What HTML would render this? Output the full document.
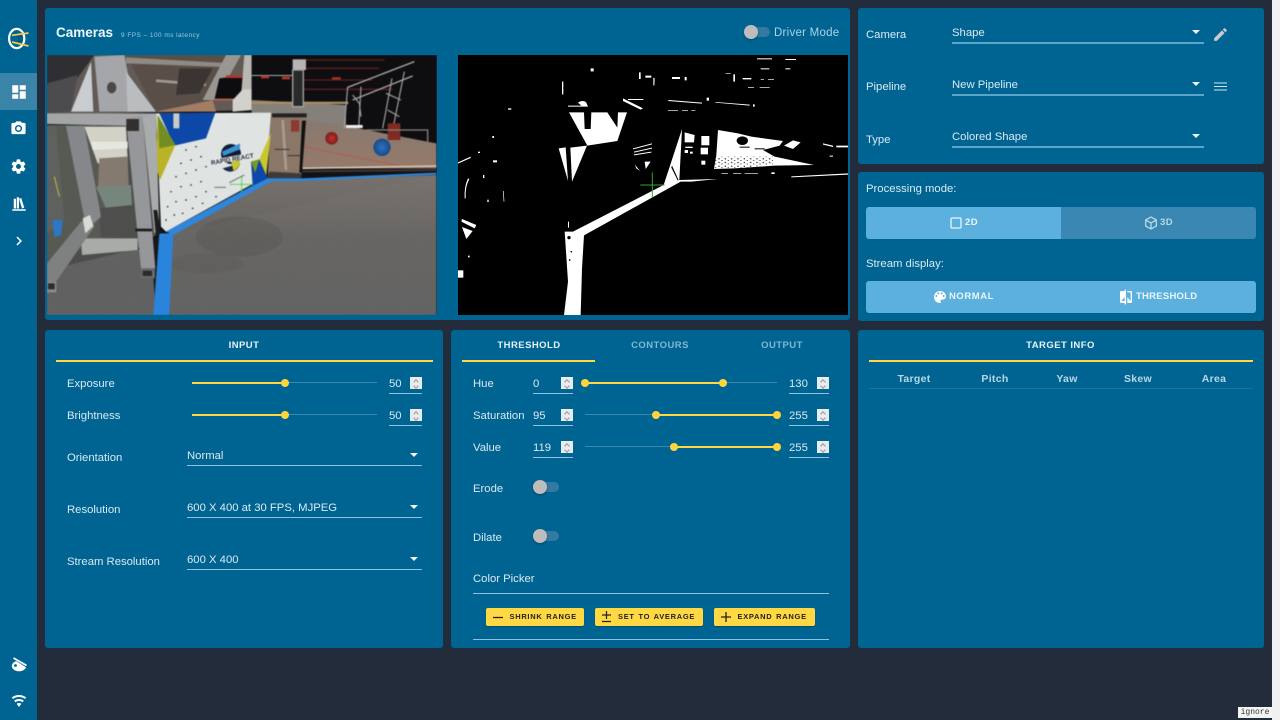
<!DOCTYPE html>
<html lang="en"><head><meta charset="utf-8"><title>PhotonVision</title>
<style>
*{box-sizing:border-box}
html,body{margin:0;padding:0;width:1280px;height:720px;overflow:hidden;background:#232c3a;font-family:"Liberation Sans",sans-serif;color:#dcecf4}
.p{position:absolute;background:#006492;border-radius:3px}
.a{position:absolute}
.t{position:absolute;white-space:nowrap;line-height:14px;margin-top:1px;font-size:11.3px;letter-spacing:0;color:#d8eaf3}
.c{transform:translateX(-50%)}
.tab{font-size:9.5px;font-weight:bold;letter-spacing:.45px;color:#e6f2f8}
.off{color:#80b8d3}
.l{position:absolute;height:1px;background:#8fc2da}
.y{position:absolute;height:2px;background:#ffd843}
.tr{position:absolute;height:1px;background:#3d86ac}
.th{position:absolute;width:8px;height:8px;border-radius:50%;background:#ffd43b;margin:-4px 0 0 -4px}
.sp{position:absolute;width:12px;height:12px;background:#e9ecef}
.sp:before,.sp:after{content:"";position:absolute;left:3.5px;width:3px;height:3px;border:1px solid #999;border-width:1px 0 0 1px;transform:rotate(45deg)}
.sp:before{top:2.5px}.sp:after{top:6.5px;transform:rotate(225deg)}
.car{position:absolute;width:0;height:0;border:4px solid transparent;border-top:4px solid #eef6fa;border-bottom:0}
.tt{position:absolute;height:10px;width:20px;border-radius:5px;background:#34799f}
.kn{position:absolute;width:14px;height:14px;border-radius:50%;background:#bdbdbd;box-shadow:0 1px 2px rgba(0,0,0,.3)}
.btn{position:absolute;top:608px;height:18px;background:#ffd843;border-radius:2px;box-shadow:0 1px 1px rgba(0,0,0,.25)}
.bt{position:absolute;top:612px;line-height:10px;font-size:7.5px;font-weight:bold;letter-spacing:.7px;word-spacing:1px;color:#222;white-space:nowrap}
.hd{color:#b8d7e6;font-weight:bold;font-size:10.5px;letter-spacing:.3px}
svg.i{position:absolute;fill:#fff}
</style></head><body>

<!-- sidebar -->
<div class="a" style="left:0;top:0;width:37px;height:720px;background:#006492"></div>
<div class="a" style="left:0;top:73px;width:37px;height:37px;background:#3a84a8"></div>
<svg class="a" style="left:5px;top:26px" width="26" height="25" viewBox="5 26 26 25">
<ellipse cx="16.7" cy="38.5" rx="7.6" ry="9.6" fill="none" stroke="#fff" stroke-width="2.2"/>
<path d="M16 33L22 44M22 32.5L17 45" stroke="#0b4a6c" stroke-width=".8" fill="none"/>
<path d="M12 35.300L28.500 33M12 42L28.500 46" stroke="#f2cb4f" stroke-width="1.700" fill="none"/>
</svg>
<svg class="i" style="left:10px;top:83px" width="18" height="18" viewBox="0 0 24 24"><path d="M13,3V9H21V3M13,21H21V11H13M3,21H11V15H3M3,13H11V3H3V13Z"/></svg>
<svg class="i" style="left:10px;top:120px" width="17" height="17" viewBox="0 0 24 24"><path d="M4,4H7L9,2H15L17,4H20A2,2 0 0,1 22,6V18A2,2 0 0,1 20,20H4A2,2 0 0,1 2,18V6A2,2 0 0,1 4,4M12,7A5,5 0 0,0 7,12A5,5 0 0,0 12,17A5,5 0 0,0 17,12A5,5 0 0,0 12,7M12,9A3,3 0 0,1 15,12A3,3 0 0,1 12,15A3,3 0 0,1 9,12A3,3 0 0,1 12,9Z"/></svg>
<svg class="i" style="left:10px;top:158px" width="17" height="17" viewBox="0 0 24 24"><path d="M12,15.5A3.5,3.5 0 0,1 8.5,12A3.5,3.5 0 0,1 12,8.5A3.5,3.5 0 0,1 15.5,12A3.5,3.5 0 0,1 12,15.5M19.43,12.97C19.47,12.65 19.5,12.33 19.5,12C19.5,11.67 19.47,11.34 19.43,11L21.54,9.37C21.73,9.22 21.78,8.95 21.66,8.73L19.66,5.27C19.54,5.05 19.27,4.96 19.05,5.05L16.56,6.05C16.04,5.66 15.5,5.32 14.87,5.07L14.5,2.42C14.46,2.18 14.25,2 14,2H10C9.75,2 9.54,2.18 9.5,2.42L9.13,5.07C8.5,5.32 7.96,5.66 7.44,6.05L4.95,5.05C4.73,4.96 4.46,5.05 4.34,5.27L2.34,8.73C2.21,8.95 2.27,9.22 2.46,9.37L4.57,11C4.53,11.34 4.5,11.67 4.5,12C4.5,12.33 4.53,12.65 4.57,12.97L2.46,14.63C2.27,14.78 2.21,15.05 2.34,15.27L4.34,18.73C4.46,18.95 4.73,19.03 4.95,18.95L7.44,17.94C7.96,18.34 8.5,18.68 9.13,18.93L9.5,21.58C9.54,21.82 9.75,22 10,22H14C14.25,22 14.46,21.82 14.5,21.58L14.87,18.93C15.5,18.67 16.04,18.34 16.56,17.94L19.05,18.95C19.27,19.03 19.54,18.95 19.66,18.73L21.66,15.27C21.78,15.05 21.73,14.78 21.54,14.63L19.43,12.97Z"/></svg>
<svg class="i" style="left:9.500px;top:195px" width="18" height="18" viewBox="0 0 24 24"><path d="M9 3V18H12V3H9M12 5L16 18L19 17L15 4L12 5M5 5V18H8V5H5M3 19V21H21V19H3Z"/></svg>
<svg class="i" style="left:10px;top:232px" width="18" height="18" viewBox="0 0 24 24"><path d="M8.59,16.58L13.17,12L8.59,7.41L10,6L16,12L10,18L8.59,16.58Z"/></svg>
<svg class="a" style="left:10px;top:656px" width="20" height="18" viewBox="0 0 20 18"><ellipse cx="9" cy="10" rx="7.200" ry="5.300" fill="#fff"/><path d="M2 .5L17 10" stroke="#006492" stroke-width="3.200" fill="none"/><path d="M3.500 2L16.500 9.500" stroke="#fff" stroke-width="1.800" fill="none"/><circle cx="5.500" cy="9.500" r="1.400" fill="#006492"/></svg>
<svg class="i" style="left:11px;top:693px" width="16" height="16" viewBox="0 0 24 24"><path d="M12,21L15.6,16.2C14.6,15.45 13.35,15 12,15C10.65,15 9.4,15.45 8.4,16.2L12,21M12,3C7.95,3 4.21,4.34 1.2,6.6L3,9C5.5,7.12 8.62,6 12,6C15.38,6 18.5,7.12 21,9L22.8,6.6C19.79,4.34 16.05,3 12,3M12,9C9.3,9 6.81,9.89 4.8,11.4L6.6,13.8C8.1,12.67 9.97,12 12,12C14.03,12 15.9,12.67 17.4,13.8L19.2,11.4C17.19,9.89 14.7,9 12,9Z"/></svg>

<!-- panels -->
<div class="p" style="left:45px;top:8px;width:805px;height:312px"></div>
<div class="p" style="left:858px;top:8px;width:406px;height:156px"></div>
<div class="p" style="left:858px;top:172px;width:406px;height:149px"></div>
<div class="p" style="left:45px;top:330px;width:398px;height:318px"></div>
<div class="p" style="left:451px;top:330px;width:399px;height:318px"></div>
<div class="p" style="left:858px;top:330px;width:406px;height:318px"></div>
<div class="a" style="left:1272px;top:0;width:8px;height:720px;background:#f1f1f1"></div>
<div class="a" style="left:1238px;top:707px;width:34px;height:11px;background:#f4f4f4;font:8px/11px 'Liberation Mono',monospace;color:#333;text-align:center">ignore</div>

<!-- header -->
<div class="t" style="left:56px;top:25px;font-size:13.500px;font-weight:bold;color:#eef7fb">Cameras</div>
<div class="t" style="left:121px;top:28px;font-size:6.500px;letter-spacing:.45px;color:#9cc9de">9 FPS – 100 ms latency</div>
<div class="tt" style="left:750px;top:27px"></div><div class="kn" style="left:744px;top:25px"></div>
<div class="t" style="left:774px;top:25px;font-size:11.500px;letter-spacing:.25px;color:#a9d2e5">Driver Mode</div>

<!-- left camera -->
<div class="a" style="left:47px;top:55px;width:390px;height:260px;overflow:hidden">
<svg class="a" style="left:0;top:0;filter:blur(.6px)" width="390" height="260" viewBox="143 165 1170 780" preserveAspectRatio="none">
<defs>
<filter id="gr" x="0" y="0" width="100%" height="100%"><feTurbulence type="fractalNoise" baseFrequency=".35" numOctaves="2" seed="4"/><feColorMatrix values="0 0 0 0 .42 0 0 0 0 .42 0 0 0 0 .42 1.600 0 0 0 -.55"/></filter>
<linearGradient id="cp" x1="0" y1="0" x2="0" y2="1"><stop offset="0" stop-color="#76716c"/><stop offset=".45" stop-color="#656361"/><stop offset="1" stop-color="#606060"/></linearGradient>
<linearGradient id="fl" x1="0" y1="0" x2="0" y2="1"><stop offset="0" stop-color="#857a70"/><stop offset="1" stop-color="#967a6a"/></linearGradient>
<radialGradient id="bl"><stop offset="0" stop-color="#2d72c4"/><stop offset="1" stop-color="#174a86"/></radialGradient>
<radialGradient id="rd"><stop offset="0" stop-color="#c3302c"/><stop offset="1" stop-color="#7a1d1c"/></radialGradient>
</defs>
<rect x="143" y="165" width="1170" height="780" fill="#121214"/>
<!-- upper-left machine -->
<polygon points="143,165 760,165 760,330 143,345" fill="#625a54"/>
<polygon points="143,165 285,165 230,240 143,340" fill="#2f2f33"/>
<polygon points="143,250 235,225 215,335 143,340" fill="#4c4c4e"/>
<polygon points="380,165 690,165 640,300 500,335 470,335" fill="#5a4f48"/>
<polygon points="380,172 700,190 700,202 380,190" fill="#8f8a84"/>
<polygon points="470,238 620,250 620,258 470,246" fill="#a09a94"/>
<polygon points="540,205 640,205 600,280 530,285" fill="#3a3532"/>
<polygon points="215,335 275,185 282,335" fill="#c9ccd0"/>
<polygon points="285,170 375,165 408,335 300,335" fill="#a5a6a9"/>
<ellipse cx="337" cy="263" rx="14" ry="17" fill="#4b4846"/>
<polygon points="380,215 470,335 385,335" fill="#babdc0"/>
<polygon points="470,335 640,300 650,335" fill="#a37d62"/>
<polygon points="610,300 680,165 725,165 650,300" fill="#9a9793"/>
<polygon points="660,235 735,225 722,296 645,300" fill="#0d0d0f"/>
<rect x="645" y="296" width="80" height="5" fill="#c7604a"/>
<polygon points="735,165 757,165 757,325 700,335 725,290" fill="#b9b7b3"/>
<polygon points="700,300 730,268 757,268 757,330 700,335" fill="#d3d1cc"/>
<!-- arena -->
<polygon points="757,165 1311,165 1311,430 757,320" fill="#0e0e10"/>
<polygon points="757,300 1040,315 1040,400 900,400 810,340 757,340" fill="#85807a"/>
<polygon points="810,340 1040,378 1311,430 1311,505 905,505 810,500" fill="url(#fl)"/>
<rect x="757" y="225" width="135" height="3" fill="#aaa"/><rect x="757" y="305" width="290" height="7" fill="#a98e64"/>
<rect x="785" y="227" width="24" height="8" fill="#b5342a"/><rect x="848" y="230" width="24" height="8" fill="#b5342a"/><rect x="998" y="232" width="26" height="8" fill="#b5342a"/><rect x="680" y="226" width="50" height="8" fill="#b5342a"/>
<path d="M905 180H1155M905 205H1140M915 240H1120M910 268H1180" stroke="#5e1f1f" stroke-width="4"/>
<rect x="880" y="178" width="40" height="32" fill="#b5b5b5"/>
<path d="M880 210H912V320H880Z" stroke="#a6a6a6" stroke-width="4" fill="#2a2a2a"/>
<path d="M1045 262L1245 185M1060 300L1240 228" stroke="#a9a9a9" stroke-width="4" fill="none"/>
<path d="M1045 260L1035 385M1085 260L1078 385M1178 235L1150 385M1215 215L1180 390M1060 285L1080 310L1085 350M1160 280L1205 300M1165 330L1200 350" stroke="#a0a0a0" stroke-width="3.500" fill="none"/>
<rect x="1165" y="370" width="38" height="50" fill="#7f2a25"/>
<rect x="1040" y="375" width="50" height="9" fill="#eeeeee"/>
<path d="M1100 390H1285V425" stroke="#8a837c" stroke-width="4" fill="none"/>
<path d="M915 440L1200 498" stroke="#b8574a" stroke-width="2.500"/>
<path d="M910 505L1311 498" stroke="#e4d5c4" stroke-width="4"/><path d="M905 514L1311 510" stroke="#3b3734" stroke-width="6"/>
<circle cx="997" cy="415" r="19" fill="url(#rd)"/><circle cx="1148" cy="442" r="26" fill="url(#bl)"/>
<!-- carpet -->
<polygon points="520,700 810,545 900,540 1311,525 1311,945 510,945" fill="url(#cp)"/>
<polygon points="143,810 415,745 460,805 470,945 143,945" fill="#5e5e5e"/>
<ellipse cx="720" cy="710" rx="130" ry="60" fill="#4f4c49" opacity=".3"/>
<ellipse cx="620" cy="790" rx="110" ry="30" fill="#4e4c4a" opacity=".22"/>
<rect x="143" y="525" width="1170" height="420" filter="url(#gr)" opacity=".18" style="clip-path:polygon(32% 42%,100% 0,100% 100%,0 100%,0 68%)"/>
<!-- right wall -->
<polygon points="815,340 920,340 905,535 805,535" fill="#8b7768"/>
<polygon points="818,340 922,340 922,352 818,352" fill="#222"/>
<polygon points="908,362 920,362 908,518 900,518" fill="#111"/>
<polygon points="810,515 905,520 905,538 800,540" fill="#3c3b3a"/>
<path d="M850 360L860 510" stroke="#a89c90" stroke-width="8"/><path d="M825 448H870M865 467H905" stroke="#3a312a" stroke-width="3"/>
<polygon points="875,360 900,360 900,395 875,395" fill="#8b3a30"/>
<!-- blue tape -->
<polygon points="500,695 800,535 905,535 1311,518 1311,524 900,543 815,545 522,705" fill="#2f86dc"/>
<polygon points="480,700 522,700 510,945 462,945" fill="#2a84dc"/>
<!-- wall panel -->
<polygon points="470,340 815,338 800,530 500,695 485,680" fill="#dfe4e2"/>
<polygon points="480,340 648,338 620,415 525,437" fill="#0d47a8"/>
<rect x="522" y="340" width="18" height="45" fill="#c9ccc8"/>
<polygon points="475,345 528,435 482,540 470,500" fill="#b9b327"/>
<polygon points="475,345 528,435 480,445" fill="#728d22"/>
<polygon points="440,380 470,345 470,545 445,510" fill="#8a9a20"/>
<polygon points="815,398 800,530 780,478" fill="#c9c72e"/>
<polygon points="755,485 780,478 805,535 760,558" fill="#0d47a8"/>
<polygon points="755,485 780,478 768,518" fill="#7a9a20"/>
<circle cx="695" cy="462" r="30" fill="#0f1d33"/><path d="M668 455L722 430L722 448L672 468Z" fill="#3c8fd0"/>
<path d="M670 505A30 30 0 0 0 722 490Z" fill="#1c2a44"/><path d="M695 482H722A30 30 0 0 1 702 512Z" fill="#c8c62f"/>
<polygon points="635,480 745,460 745,475 637,497" fill="#e8ebe8"/>
<text x="636" y="495" font-family="Liberation Sans,sans-serif" font-size="19" font-weight="bold" fill="#1d2330" transform="rotate(-10 636 495)">RAPID REACT</text>
<g fill="#2b2f33"><circle cx="560" cy="450" r="2.500"/><circle cx="590" cy="440" r="2.500"/><circle cx="545" cy="490" r="2.500"/><circle cx="575" cy="480" r="2.500"/><circle cx="605" cy="470" r="2.500"/><circle cx="530" cy="530" r="2.500"/><circle cx="560" cy="520" r="2.500"/><circle cx="590" cy="510" r="2.500"/><circle cx="620" cy="500" r="2.500"/><circle cx="515" cy="575" r="2.500"/><circle cx="545" cy="560" r="2.500"/><circle cx="575" cy="555" r="2.500"/><circle cx="605" cy="545" r="2.500"/><circle cx="505" cy="620" r="2.500"/><circle cx="530" cy="605" r="2.500"/><circle cx="560" cy="600" r="2.500"/><circle cx="590" cy="590" r="2.500"/><circle cx="620" cy="575" r="2.500"/><circle cx="500" cy="660" r="2.500"/><circle cx="525" cy="645" r="2.500"/><circle cx="550" cy="640" r="2.500"/><circle cx="580" cy="625" r="2.500"/><circle cx="610" cy="610" r="2.500"/><circle cx="650" cy="590" r="2.500"/></g>
<path d="M690 548L735 525M645 562H680" stroke="#6d7175" stroke-width="3"/>
<path d="M692 553H762M727 530V578" stroke="#3dcc3d" stroke-width="3" stroke-dasharray="6 2"/>
<!-- lower-left machine -->
<polygon points="143,375 470,375 470,705 415,745 143,810" fill="#4c4e4b"/>
<polygon points="143,375 290,375 400,600 400,700 290,720 143,800" fill="#565a53"/>
<polygon points="255,380 380,380 385,480 295,490" fill="#d2d2c6"/>
<polygon points="275,425 385,425 385,445 280,450" fill="#e6e8e0"/>
<polygon points="300,475 385,470 388,560 296,565" fill="#857a70"/>
<polygon points="290,560 395,555 398,615 320,625" fill="#76867c"/>
<polygon points="300,625 400,615 405,700 305,712" fill="#4e4e4c"/>
<polygon points="200,378 255,378 305,650 262,690" fill="#85878a"/>
<polygon points="143,378 170,378 195,660 175,680 143,700" fill="#5f615f"/>
<polygon points="143,340 470,340 425,378 143,372" fill="#a3a5a7"/>
<polygon points="380,355 430,350 468,805 425,805" fill="#96979a"/>
<rect x="381" y="357" width="38" height="36" fill="#332f2d"/>
<rect x="408" y="686" width="50" height="8" fill="#1a1a1a"/>
<polygon points="430,350 470,340 480,690 465,700" fill="#a9acac"/>
<polygon points="462,630 474,630 484,700 470,710" fill="#1d1d1d"/>
<rect x="425" y="805" width="42" height="30" fill="#6a6a6a"/><rect x="430" y="812" width="28" height="16" fill="#2b2b2b"/>
<polygon points="245,715 415,715 415,750 248,765" fill="#a9aba8"/>
<polygon points="143,790 245,665 272,650 285,680 170,845 170,870 143,880" fill="#7f8080"/>
<polygon points="160,660 190,660 185,705 165,712" fill="#2a78c6"/>
<rect x="143" y="845" width="28" height="32" fill="#8a8a8a"/><rect x="146" y="850" width="20" height="18" fill="#2c2c2c"/>
<polygon points="250,655 272,645 282,678 258,700" fill="#d9dbd8"/>
<path d="M165 530L180 590" stroke="#c9b83a" stroke-width="3" fill="none"/>
</svg>
</div>

<!-- threshold camera -->
<div class="a" style="left:458px;top:55px;width:390px;height:260px;overflow:hidden;background:#000">
<svg class="a" style="left:0;top:0;filter:blur(.3px)" width="390" height="260" viewBox="0 0 1170 780" preserveAspectRatio="none">
<defs><pattern id="sp" width="19" height="11" patternUnits="userSpaceOnUse"><rect x="2" y="2" width="4" height="3" fill="#000"/><rect x="11" y="7" width="4" height="2" fill="#000"/></pattern></defs>
<rect width="1170" height="780" fill="#000"/>
<g fill="#fff">
<path d="M333,172H378L380,222H398L400,172H448L478,218L480,172H507L478,258L388,272Z"/>
<polygon points="302,280 323,277 330,378"/>
<polygon points="337,278 387,272 342,380"/>
<polygon points="617,390 640,320 672,222 664,375 780,372 700,380 668,380 378,541 372,640 368,780 318,780 330,680 320,530 345,530"/>
<path d="M680,232L710,240L708,262L680,262Z"/>
<path d="M780,225L840,235L880,245L975,258L965,272L915,285L950,305L1068,330L950,332L830,340L768,342L775,300Z"/>
<polygon points="1005,256 1028,262 1005,282 978,272"/>
<rect x="730" y="243" width="24" height="28"/><rect x="728" y="278" width="22" height="20"/>
<polygon points="12,492 55,510 50,520 10,500"/><polygon points="12,516 44,528 25,552"/>
<rect x="0" y="646" width="16" height="22"/>
<path d="M630,138L732,146V143L632,135ZM772,143L875,152V149L772,141Z"/>
<path d="M312,80H316V118H312ZM398,40H407V49H398Z"/>
<path d="M525,280L582,265V268L525,283ZM528,290L582,278V281L528,293ZM528,298L580,290V293L528,301Z"/>
<path d="M530,328L546,348L535,340ZM560,320H578L563,342Z"/>
<path d="M495,130L555,160L548,164L495,138ZM510,132H556V135H510Z"/>
<path d="M0,322L38,305V309L0,326Z"/>
<path d="M1095,265L1125,272V276L1095,269ZM1135,272H1170V277H1135ZM1115,302H1125V305H1115Z"/>
<path d="M1000,364L1170,355V359L1000,367Z"/>
<rect x="150" y="160" width="10" height="4"/><rect x="105" y="316" width="12" height="6"/><rect x="60" y="290" width="6" height="4"/><rect x="103" y="243" width="5" height="6"/>
<rect x="75" y="360" width="4" height="9"/><rect x="88" y="434" width="4" height="7"/><rect x="30" y="602" width="5" height="5"/>
<path d="M30,370Q18,395 20,430L23,430Q21,395 34,372ZM135,408L137,440L139,440L137,408Z"/>
<path d="M360,143Q375,133 385,143L390,155H330V152H370Z"/>
<rect x="543" y="52" width="5" height="20"/><path d="M562,62H580V68H562ZM586,68L590,70L589,92L586,91Z"/><path d="M642,66H666V72H642ZM680,66H686V76H680Z"/>
<path d="M803,55H818V57H803ZM826,58H831V80H826ZM854,69H880V73H854Z"/>
<rect x="897" y="10" width="45" height="3"/><rect x="982" y="12" width="32" height="3"/><rect x="908" y="40" width="26" height="3"/><rect x="982" y="40" width="15" height="3"/><rect x="908" y="73" width="10" height="2"/><rect x="930" y="73" width="18" height="2"/><rect x="870" y="96" width="18" height="2"/><rect x="905" y="96" width="30" height="2"/>
<rect x="746" y="128" width="7" height="9"/><rect x="885" y="148" width="5" height="7"/>
<path d="M630,165H660V167H630ZM672,165H690V167H672ZM700,165H712V167H700Z"/>
<rect x="682" y="275" width="22" height="4"/><rect x="680" y="285" width="10" height="9"/><rect x="696" y="290" width="8" height="6"/><rect x="730" y="317" width="12" height="12"/>
<path d="M790,355H810V357H790ZM825,355H850V357H825ZM860,355H900V357H860ZM940,352H950V357H940Z"/>
<rect x="330" y="500" width="3" height="18"/>
</g>
<polygon points="770,305 945,305 945,328 830,342 768,342" fill="url(#sp)"/>
<g fill="#000">
<ellipse cx="853" cy="257" rx="17" ry="13"/>
<rect x="845" y="275" width="30" height="3"/><rect x="890" y="280" width="30" height="3"/>
<circle cx="333" cy="548" r="5"/><circle cx="340" cy="590" r="2.500"/><circle cx="335" cy="615" r="2.500"/>
<path d="M642,332L662,376H659L640,338Z"/>
</g>
<path d="M547,390H620M583,352V428" stroke="#2ea82e" stroke-width="3"/>
</svg>
</div>

<!-- top right -->
<div class="t" style="left:866px;top:27px">Camera</div>
<div class="t" style="left:866px;top:79px">Pipeline</div>
<div class="t" style="left:866px;top:132px">Type</div>
<div class="t" style="left:952px;top:25px">Shape</div>
<div class="t" style="left:952px;top:77px">New Pipeline</div>
<div class="t" style="left:952px;top:129px">Colored Shape</div>
<div class="l" style="left:952px;top:42px;width:252px;height:2px;background:#5ba5c9"></div>
<div class="l" style="left:952px;top:94px;width:252px;height:2px;background:#5ba5c9"></div>
<div class="l" style="left:952px;top:146px;width:252px;height:2px;background:#5ba5c9"></div>
<div class="car" style="left:1192px;top:30px"></div><div class="car" style="left:1192px;top:82px"></div><div class="car" style="left:1192px;top:134px"></div>
<svg class="i" style="left:1211.500px;top:26px;fill:#c9c9c9" width="17" height="17" viewBox="0 0 24 24"><path d="M20.71,7.04C21.1,6.65 21.1,6 20.71,5.63L18.37,3.29C18,2.9 17.35,2.9 16.96,3.29L15.12,5.12L18.87,8.87M3,17.25V21H6.75L17.81,9.93L14.06,6.18L3,17.25Z"/></svg>
<svg class="a" style="left:1214px;top:82px" width="13" height="10" viewBox="0 0 13 10"><path d="M0 1H13M0 4.500H13M0 8H13" stroke="#cfe3ed" stroke-width="1"/></svg>

<div class="t" style="left:866px;top:181px">Processing mode:</div>
<div class="a" style="left:866px;top:207px;width:195px;height:32px;background:#5cb0dd;border-radius:3px 0 0 3px"></div>
<div class="a" style="left:1061px;top:207px;width:195px;height:32px;background:#3a87b3;border-radius:0 3px 3px 0"></div>
<svg class="a" style="left:950px;top:217px" width="12" height="12" viewBox="0 0 12 12"><rect x="1" y="1" width="10" height="10" rx="1" fill="none" stroke="#eaf5fb" stroke-width="1.300"/></svg>
<div class="t" style="left:965px;top:215px;font-size:9.500px;font-weight:bold;letter-spacing:.5px;color:#eaf5fb">2D</div>
<svg class="i" style="left:1143px;top:215px;fill:#b9d8e8" width="16" height="16" viewBox="0 0 24 24"><path d="M21,16.5C21,16.88 20.79,17.21 20.47,17.38L12.57,21.82C12.41,21.94 12.21,22 12,22C11.79,22 11.59,21.94 11.43,21.82L3.53,17.38C3.21,17.21 3,16.88 3,16.5V7.5C3,7.12 3.21,6.79 3.53,6.62L11.43,2.18C11.59,2.06 11.79,2 12,2C12.21,2 12.41,2.06 12.57,2.18L20.47,6.62C20.79,6.79 21,7.12 21,7.5V16.5M12,4.15L6.04,7.5L12,10.85L17.96,7.5L12,4.15M5,15.91L11,19.29V12.58L5,9.21V15.91M19,15.91V9.21L13,12.58V19.29L19,15.91Z"/></svg>
<div class="t" style="left:1160px;top:215px;font-size:9.500px;font-weight:bold;letter-spacing:.5px;color:#b9d8e8">3D</div>
<div class="t" style="left:866px;top:256px">Stream display:</div>
<div class="a" style="left:866px;top:281px;width:390px;height:32px;background:#5cb0dd;border-radius:3px"></div>
<svg class="i" style="left:932px;top:289px" width="16" height="16" viewBox="0 0 24 24"><path d="M17.5,12A1.5,1.5 0 0,1 16,10.5A1.5,1.5 0 0,1 17.5,9A1.5,1.5 0 0,1 19,10.5A1.5,1.5 0 0,1 17.5,12M14.5,8A1.5,1.5 0 0,1 13,6.5A1.5,1.5 0 0,1 14.5,5A1.5,1.5 0 0,1 16,6.5A1.5,1.5 0 0,1 14.5,8M9.5,8A1.5,1.5 0 0,1 8,6.5A1.5,1.5 0 0,1 9.5,5A1.5,1.5 0 0,1 11,6.5A1.5,1.5 0 0,1 9.5,8M6.5,12A1.5,1.5 0 0,1 5,10.5A1.5,1.5 0 0,1 6.5,9A1.5,1.5 0 0,1 8,10.5A1.5,1.5 0 0,1 6.5,12M12,3A9,9 0 0,0 3,12A9,9 0 0,0 12,21A1.5,1.5 0 0,0 13.5,19.5C13.5,19.11 13.35,18.76 13.11,18.5C12.88,18.23 12.73,17.88 12.73,17.5A1.5,1.5 0 0,1 14.23,16H16A5,5 0 0,0 21,11C21,6.58 16.97,3 12,3Z"/></svg>
<div class="t" style="left:949px;top:289px;font-size:9.500px;font-weight:bold;letter-spacing:.55px;color:#eaf5fb">NORMAL</div>
<svg class="i" style="left:1118px;top:289px" width="16" height="16" viewBox="0 0 24 24"><path d="M19,3H14V5H19V18L14,12V21H19A2,2 0 0,0 21,19V5C21,3.89 20.1,3 19,3M10,18H5L10,12M10,3H5C3.89,3 3,3.89 3,5V19A2,2 0 0,0 5,21H10V23H12V1H10V3Z"/></svg>
<div class="t" style="left:1136px;top:289px;font-size:9.500px;font-weight:bold;letter-spacing:.25px;color:#eaf5fb">THRESHOLD</div>

<!-- input -->
<div class="t tab c" style="left:244px;top:338px">INPUT</div>
<div class="y" style="left:56px;top:360px;width:377px;height:1.500px"></div>
<div class="t" style="left:67px;top:376px">Exposure</div>
<div class="t" style="left:67px;top:408px">Brightness</div>
<div class="tr" style="left:192px;top:382px;width:185px"></div><div class="y" style="left:192px;top:382px;width:93px"></div><div class="th" style="left:285px;top:383px"></div>
<div class="tr" style="left:192px;top:414px;width:185px"></div><div class="y" style="left:192px;top:414px;width:93px"></div><div class="th" style="left:285px;top:415px"></div>
<div class="t" style="left:389px;top:376px">50</div><div class="t" style="left:389px;top:408px">50</div>
<div class="sp" style="left:410px;top:377px"></div><div class="sp" style="left:410px;top:409px"></div>
<div class="l" style="left:389px;top:393px;width:33px"></div><div class="l" style="left:389px;top:425px;width:33px"></div>
<div class="t" style="left:67px;top:450px">Orientation</div>
<div class="t" style="left:67px;top:502px">Resolution</div>
<div class="t" style="left:67px;top:554px">Stream Resolution</div>
<div class="t" style="left:187px;top:448px">Normal</div>
<div class="t" style="left:187px;top:500px">600 X 400 at 30 FPS, MJPEG</div>
<div class="t" style="left:187px;top:552px">600 X 400</div>
<div class="l" style="left:187px;top:465px;width:235px"></div><div class="l" style="left:187px;top:517px;width:235px"></div><div class="l" style="left:187px;top:569px;width:235px"></div>
<div class="car" style="left:410px;top:453px"></div><div class="car" style="left:410px;top:505px"></div><div class="car" style="left:410px;top:557px"></div>

<!-- threshold -->
<div class="t tab c" style="left:529px;top:338px">THRESHOLD</div>
<div class="t tab off c" style="left:660px;top:338px">CONTOURS</div>
<div class="t tab off c" style="left:782px;top:338px">OUTPUT</div>
<div class="y" style="left:462px;top:360px;width:133px;height:1.500px"></div>
<div class="t" style="left:473px;top:376px">Hue</div>
<div class="t" style="left:473px;top:408px">Saturation</div>
<div class="t" style="left:473px;top:440px">Value</div>
<div class="t" style="left:533px;top:376px">0</div><div class="t" style="left:533px;top:408px">95</div><div class="t" style="left:533px;top:440px">119</div>
<div class="t" style="left:789px;top:376px">130</div><div class="t" style="left:789px;top:408px">255</div><div class="t" style="left:789px;top:440px">255</div>
<div class="sp" style="left:561px;top:377px"></div><div class="sp" style="left:561px;top:409px"></div><div class="sp" style="left:561px;top:441px"></div>
<div class="sp" style="left:817px;top:377px"></div><div class="sp" style="left:817px;top:409px"></div><div class="sp" style="left:817px;top:441px"></div>
<div class="l" style="left:533px;top:393px;width:40px"></div><div class="l" style="left:533px;top:425px;width:40px"></div><div class="l" style="left:533px;top:457px;width:40px"></div>
<div class="l" style="left:789px;top:393px;width:40px"></div><div class="l" style="left:789px;top:425px;width:40px"></div><div class="l" style="left:789px;top:457px;width:40px"></div>
<div class="tr" style="left:585px;top:382px;width:192px"></div><div class="y" style="left:585px;top:382px;width:138px"></div><div class="th" style="left:585px;top:383px"></div><div class="th" style="left:723px;top:383px"></div>
<div class="tr" style="left:585px;top:414px;width:192px"></div><div class="y" style="left:656px;top:414px;width:121px"></div><div class="th" style="left:656px;top:415px"></div><div class="th" style="left:777px;top:415px"></div>
<div class="tr" style="left:585px;top:446px;width:192px"></div><div class="y" style="left:674px;top:446px;width:103px"></div><div class="th" style="left:674px;top:447px"></div><div class="th" style="left:777px;top:447px"></div>
<div class="t" style="left:473px;top:481px">Erode</div>
<div class="tt" style="left:539px;top:482px"></div><div class="kn" style="left:533px;top:480px"></div>
<div class="t" style="left:473px;top:530px">Dilate</div>
<div class="tt" style="left:539px;top:531px"></div><div class="kn" style="left:533px;top:529px"></div>
<div class="t" style="left:473px;top:571px">Color Picker</div>
<div class="l" style="left:473px;top:593px;width:356px"></div>
<div class="l" style="left:473px;top:639px;width:356px"></div>
<div class="btn" style="left:486px;width:98px"></div>
<div class="btn" style="left:595px;width:108px"></div>
<div class="btn" style="left:714px;width:101px"></div>
<svg class="a" style="left:492px;top:611px" width="12" height="12" viewBox="0 0 12 12"><path d="M1 6.500H11" stroke="#222" stroke-width="1.300"/></svg>
<svg class="a" style="left:600px;top:610px" width="13" height="13" viewBox="0 0 13 13"><path d="M2 5H11M6.500 1V9M2 11.500H11" stroke="#222" stroke-width="1.200"/></svg>
<svg class="a" style="left:720px;top:611px" width="12" height="12" viewBox="0 0 12 12"><path d="M1 6H11M6 1V11" stroke="#222" stroke-width="1.300"/></svg>
<div class="bt" style="left:509.500px">SHRINK RANGE</div>
<div class="bt" style="left:618px">SET TO AVERAGE</div>
<div class="bt" style="left:737.500px">EXPAND RANGE</div>

<!-- target info -->
<div class="t tab c" style="left:1060.500px;top:338px">TARGET INFO</div>
<div class="y" style="left:869px;top:360px;width:384px;height:1.500px"></div>
<div class="t c hd" style="left:914px;top:371px">Target</div>
<div class="t c hd" style="left:995px;top:371px">Pitch</div>
<div class="t c hd" style="left:1067px;top:371px">Yaw</div>
<div class="t c hd" style="left:1138px;top:371px">Skew</div>
<div class="t c hd" style="left:1214px;top:371px">Area</div>
<div class="tr" style="left:869px;top:388px;width:384px;background:#1f7299"></div>
</body></html>
